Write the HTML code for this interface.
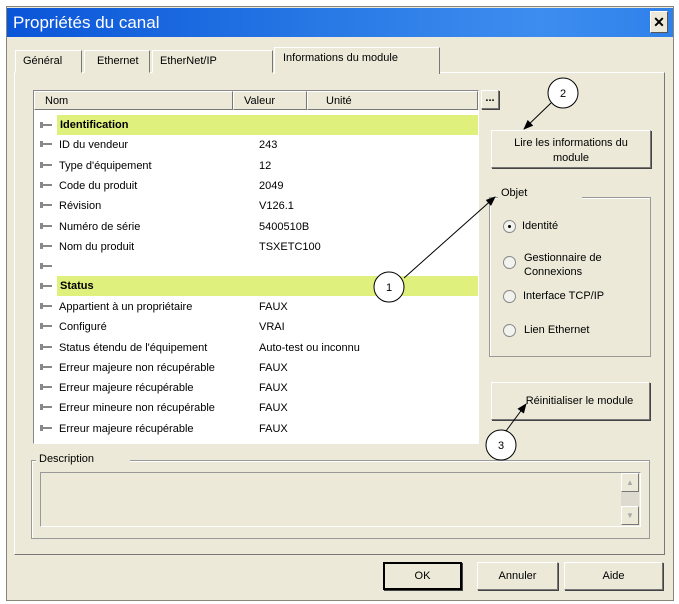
<!DOCTYPE html>
<html><head><meta charset="utf-8"><style>
*{box-sizing:border-box;margin:0;padding:0}
body{width:679px;height:604px;background:#fff;position:relative;overflow:hidden;font-family:"Liberation Sans",sans-serif;font-size:11px;color:#000}
.a{position:absolute}
.win{left:6px;top:6px;width:668px;height:595px;background:#ece9d8;border:1px solid #8a877a}
.title{left:7px;top:8px;width:666px;height:29px;background:linear-gradient(90deg,#0a55d8,#2a7ae6 50%,#3d8df0 80%,#2f80ea);color:#fff;font-size:17px;line-height:29px;padding-left:6px}
.close{left:650px;top:11px;width:18px;height:22px;background:#ece9d8;border:1px solid;border-color:#fff #555 #555 #fff;font-weight:bold;font-size:14px;text-align:center;line-height:20px}
.tab{top:50px;height:23px;background:#ece9d8;border:1px solid;border-color:#fff #777 transparent #fff;line-height:21px;padding-left:7px}
.panel{left:14px;top:72px;width:651px;height:483px;border:1px solid;border-color:#fff #777 #777 #fff}
.list{left:33px;top:90px;width:446px;height:354px;background:#fff;border:1px solid;border-color:#888 #fff #fff #888}
.hd{top:91px;height:19px;background:#ece9d8;border:1px solid;border-color:#fff #777 #777 #fff;line-height:19px;padding-left:10px}
.btn{background:#ece9d8;border:1px solid;border-color:#fff #777 #777 #fff;box-shadow:1px 1px 0 #444;text-align:center}
.row{left:40px;height:20px;width:438px;line-height:20px}
.row i{position:absolute;left:0;top:9px;width:12px;height:2px;background:#888}
.row i:after{content:"";position:absolute;left:0;top:-2px;width:3px;height:6px;background:#888}
.row span{position:absolute;left:19px;top:1px}
.row b{position:absolute;left:219px;top:1px;font-weight:normal}
.g{background:#e0f07c;font-weight:bold}
.rad{width:13px;height:13px;border-radius:50%;border:1px solid #888;background:#f2f2ee;left:503px}
</style></head><body>
<div class="a win"></div>
<div class="a title">Propriétés du canal</div>
<div class="a close">✕</div>
<div class="a panel"></div>
<div class="a tab" style="left:15px;width:67px">Général</div>
<div class="a tab" style="left:84px;width:66px;padding-left:12px">Ethernet</div>
<div class="a tab" style="left:152px;width:121px">EtherNet/IP</div>
<div class="a tab" style="left:274px;top:47px;width:166px;height:27px;border-bottom:none;padding-left:8px">Informations du module</div>
<div class="a list"></div>
<div class="a hd" style="left:34px;width:199px">Nom</div>
<div class="a hd" style="left:233px;width:74px">Valeur</div>
<div class="a hd" style="left:307px;width:171px;padding-left:18px">Unité</div>
<div class="a btn" style="left:481px;top:90px;width:18px;height:19px;font-weight:bold;line-height:14px">...</div>
<div class="a row" style="top:115px"><i></i><span class="g" style="left:17px;top:0;width:421px;padding-left:3px">Identification</span></div>
<div class="a row" style="top:134px"><i></i><span>ID du vendeur</span><b>243</b></div>
<div class="a row" style="top:155px"><i></i><span>Type d'équipement</span><b>12</b></div>
<div class="a row" style="top:175px"><i></i><span>Code du produit</span><b>2049</b></div>
<div class="a row" style="top:195px"><i></i><span>Révision</span><b>V126.1</b></div>
<div class="a row" style="top:216px"><i></i><span>Numéro de série</span><b>5400510B</b></div>
<div class="a row" style="top:236px"><i></i><span>Nom du produit</span><b>TSXETC100</b></div>
<div class="a row" style="top:256px"><i></i></div>
<div class="a row" style="top:276px"><i></i><span class="g" style="left:17px;top:0;width:421px;padding-left:3px">Status</span></div>
<div class="a row" style="top:296px"><i></i><span>Appartient à un propriétaire</span><b>FAUX</b></div>
<div class="a row" style="top:316px"><i></i><span>Configuré</span><b>VRAI</b></div>
<div class="a row" style="top:337px"><i></i><span>Status étendu de l'équipement</span><b>Auto-test ou inconnu</b></div>
<div class="a row" style="top:357px"><i></i><span>Erreur majeure non récupérable</span><b>FAUX</b></div>
<div class="a row" style="top:377px"><i></i><span>Erreur majeure récupérable</span><b>FAUX</b></div>
<div class="a row" style="top:397px"><i></i><span>Erreur mineure non récupérable</span><b>FAUX</b></div>
<div class="a row" style="top:418px"><i></i><span>Erreur majeure récupérable</span><b>FAUX</b></div>
<div class="a btn" style="left:491px;top:130px;width:160px;height:38px;padding-top:5px;line-height:15px">Lire les informations du<br>module</div>
<div class="a" style="left:489px;top:197px;width:162px;height:160px;border:1px solid #999;box-shadow:1px 1px 0 #fff inset"></div>
<div class="a" style="left:498px;top:187px;background:#ece9d8;padding:0 3px;width:84px">Objet</div>
<div class="a rad" style="top:220px"><div class="a" style="left:4px;top:4px;width:3px;height:3px;background:#000;border-radius:50%"></div></div>
<div class="a" style="left:522px;top:220px">Identité</div>
<div class="a rad" style="top:256px"></div>
<div class="a" style="left:524px;top:251px;line-height:14px">Gestionnaire de<br>Connexions</div>
<div class="a rad" style="top:290px"></div>
<div class="a" style="left:523px;top:290px">Interface TCP/IP</div>
<div class="a rad" style="top:324px"></div>
<div class="a" style="left:524px;top:324px">Lien Ethernet</div>
<div class="a btn" style="left:491px;top:382px;width:159px;height:38px;line-height:36px;padding-left:18px">Réinitialiser le module</div>
<div class="a" style="left:31px;top:460px;width:619px;height:79px;border:1px solid #999;box-shadow:1px 1px 0 #fff inset"></div>
<div class="a" style="left:36px;top:453px;background:#ece9d8;padding:0 3px;width:94px">Description</div>
<div class="a" style="left:40px;top:472px;width:601px;height:55px;border:1px solid;border-color:#999 #fff #fff #999"></div>
<div class="a btn" style="left:621px;top:473px;width:18px;height:19px;box-shadow:none;color:#aaa;font-size:8px;line-height:17px">▲</div>
<div class="a" style="left:621px;top:492px;width:18px;height:14px;background:#dedad0"></div>
<div class="a btn" style="left:621px;top:506px;width:18px;height:19px;box-shadow:none;color:#aaa;font-size:8px;line-height:17px">▼</div>
<div class="a btn" style="left:383px;top:562px;width:79px;height:28px;border:2px solid #000;line-height:24px">OK</div>
<div class="a btn" style="left:477px;top:562px;width:81px;height:28px;line-height:26px">Annuler</div>
<div class="a btn" style="left:564px;top:562px;width:99px;height:28px;line-height:26px">Aide</div>
<svg class="a" style="left:0;top:0" width="679" height="604">
<defs><marker id="m" markerWidth="10" markerHeight="8" refX="9" refY="4" orient="auto" markerUnits="userSpaceOnUse"><path d="M0,0L10,4L0,8z" fill="#000"/></marker></defs>
<g stroke="#000" stroke-width="1" fill="#fff">
<line x1="551" y1="103" x2="524" y2="129" marker-end="url(#m)"/>
<line x1="404" y1="278" x2="495" y2="197" marker-end="url(#m)"/>
<line x1="506" y1="431" x2="526" y2="404" marker-end="url(#m)"/>
<circle cx="563" cy="93" r="15"/>
<circle cx="389" cy="287" r="15"/>
<circle cx="501" cy="445" r="15"/>
</g>
<g font-family="Liberation Sans" font-size="11" text-anchor="middle"><text x="563" y="97">2</text><text x="389" y="291">1</text><text x="501" y="449">3</text></g>
</svg>
</body></html>
